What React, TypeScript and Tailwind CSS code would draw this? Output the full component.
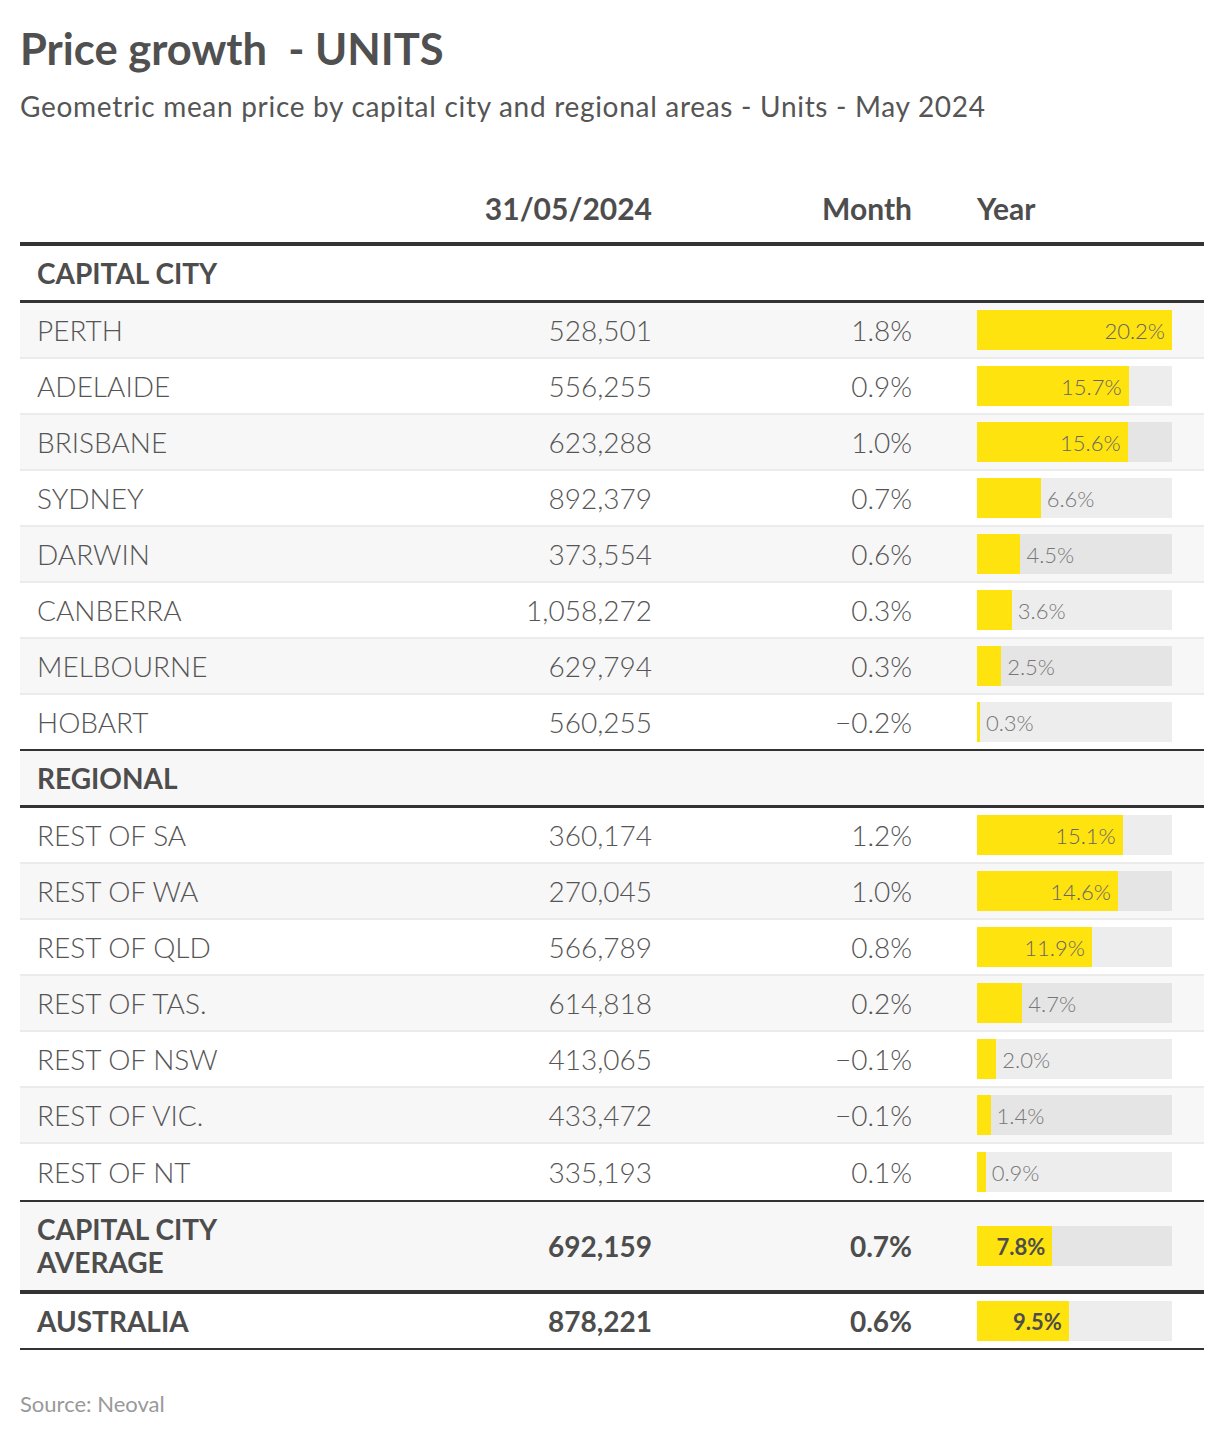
import React from "react";

type R = [string, string, string, number, boolean];

const capital: R[] = [
  ["PERTH", "528,501", "1.8%", 20.2, true],
  ["ADELAIDE", "556,255", "0.9%", 15.7, true],
  ["BRISBANE", "623,288", "1.0%", 15.6, true],
  ["SYDNEY", "892,379", "0.7%", 6.6, false],
  ["DARWIN", "373,554", "0.6%", 4.5, false],
  ["CANBERRA", "1,058,272", "0.3%", 3.6, false],
  ["MELBOURNE", "629,794", "0.3%", 2.5, false],
  ["HOBART", "560,255", "\u22120.2%", 0.3, false],
];

const regional: R[] = [
  ["REST OF SA", "360,174", "1.2%", 15.1, true],
  ["REST OF WA", "270,045", "1.0%", 14.6, true],
  ["REST OF QLD", "566,789", "0.8%", 11.9, true],
  ["REST OF TAS.", "614,818", "0.2%", 4.7, false],
  ["REST OF NSW", "413,065", "\u22120.1%", 2.0, false],
  ["REST OF VIC.", "433,472", "\u22120.1%", 1.4, false],
  ["REST OF NT", "335,193", "0.1%", 0.9, false],
];

const MAX = 20.2;
const TRACK = 195;

function Bar({ v, inside, bold }: { v: number; inside: boolean; bold?: boolean }) {
  const w = (TRACK * v) / MAX;
  const label = v.toFixed(1) + "%";
  return (
    <div className="flex h-[40px] w-[195px] bg-black/[0.07]">
      <div
        className="flex h-full shrink-0 items-center justify-end bg-[#ffe30f]"
        style={{ width: w }}
      >
        {inside && (
          <span
            className={`pr-[7px] text-[22px] ${bold ? "font-bold text-[#4d4d4d]" : "font-light text-[#666]"}`}
          >
            {label}
          </span>
        )}
      </div>
      {!inside && (
        <span className="self-center pl-[6px] text-[22px] font-light text-[#777]">{label}</span>
      )}
    </div>
  );
}

const grid = "grid grid-cols-[260px_372px_260px_292px] items-center";

function DataRow({ r, gray, last }: { r: R; gray: boolean; last?: "dark" | "end" }) {
  const border =
    last === "dark" || last === "end" ? "border-[#333]" : "border-[#ebebeb]";
  const h = last === "end" ? "h-[58px]" : "h-[56px]";
  return (
    <div
      className={`${grid} ${h} border-b-2 ${border} ${gray ? "bg-[#f7f7f7]" : "bg-white"} text-[28px] font-light text-[#555]`}
    >
      <div className="pl-[17px] whitespace-nowrap">{r[0]}</div>
      <div className="text-right">{r[1]}</div>
      <div className="text-right">{r[2]}</div>
      <div className="pl-[65px]">
        <Bar v={r[3]} inside={r[4]} />
      </div>
    </div>
  );
}

function SectionHead({ label, gray }: { label: string; gray: boolean }) {
  return (
    <div
      className={`flex h-[57px] items-center border-b-[3px] border-[#333] pl-[17px] text-[28px] font-bold text-[#4d4d4d] ${gray ? "bg-[#f7f7f7]" : "bg-white"}`}
    >
      {label}
    </div>
  );
}

export default function App() {
  return (
    <div
      className="w-[1224px] bg-white px-[20px] pt-[22px] pb-[20px]"
      style={{ fontFamily: "Lato, 'Noto Sans', sans-serif" }}
    >
      <h1 className="text-[43.5px] leading-[52px] font-bold text-[#505050]">
        Price growth&nbsp; - UNITS
      </h1>
      <p className="mt-[15px] text-[28px] leading-[34px] tracking-[0.7px] text-[#555]">
        Geometric mean price by capital city and regional areas - Units - May 2024
      </p>

      <div className="mt-[67px]">
        <div
          className={`${grid} border-b-4 border-[#333] pb-[16px] text-[30px] leading-[36px] font-bold text-[#4d4d4d]`}
        >
          <div />
          <div className="text-right">31/05/2024</div>
          <div className="text-right">Month</div>
          <div className="pl-[65px]">Year</div>
        </div>

        <SectionHead label="CAPITAL CITY" gray={false} />
        {capital.map((r, i) => (
          <DataRow
            key={r[0]}
            r={r}
            gray={i % 2 === 0}
            last={i === capital.length - 1 ? "dark" : undefined}
          />
        ))}

        <SectionHead label="REGIONAL" gray={true} />
        {regional.map((r, i) => (
          <DataRow
            key={r[0]}
            r={r}
            gray={i % 2 === 1}
            last={i === regional.length - 1 ? "end" : undefined}
          />
        ))}

        <div
          className={`${grid} h-[92px] border-b-4 border-[#333] bg-[#f7f7f7] text-[28px] font-bold text-[#4d4d4d]`}
        >
          <div className="pl-[17px] leading-[33px]">
            CAPITAL CITY
            <br />
            AVERAGE
          </div>
          <div className="text-right">692,159</div>
          <div className="text-right">0.7%</div>
          <div className="pl-[65px]">
            <Bar v={7.8} inside={true} bold />
          </div>
        </div>

        <div
          className={`${grid} h-[56px] border-b-2 border-[#333] bg-white text-[28px] font-bold text-[#4d4d4d]`}
        >
          <div className="pl-[17px]">AUSTRALIA</div>
          <div className="text-right">878,221</div>
          <div className="text-right">0.6%</div>
          <div className="pl-[65px]">
            <Bar v={9.5} inside={true} bold />
          </div>
        </div>
      </div>

      <p className="mt-[40px] text-[22px] leading-[28px] text-[#999]">Source: Neoval</p>
    </div>
  );
}
